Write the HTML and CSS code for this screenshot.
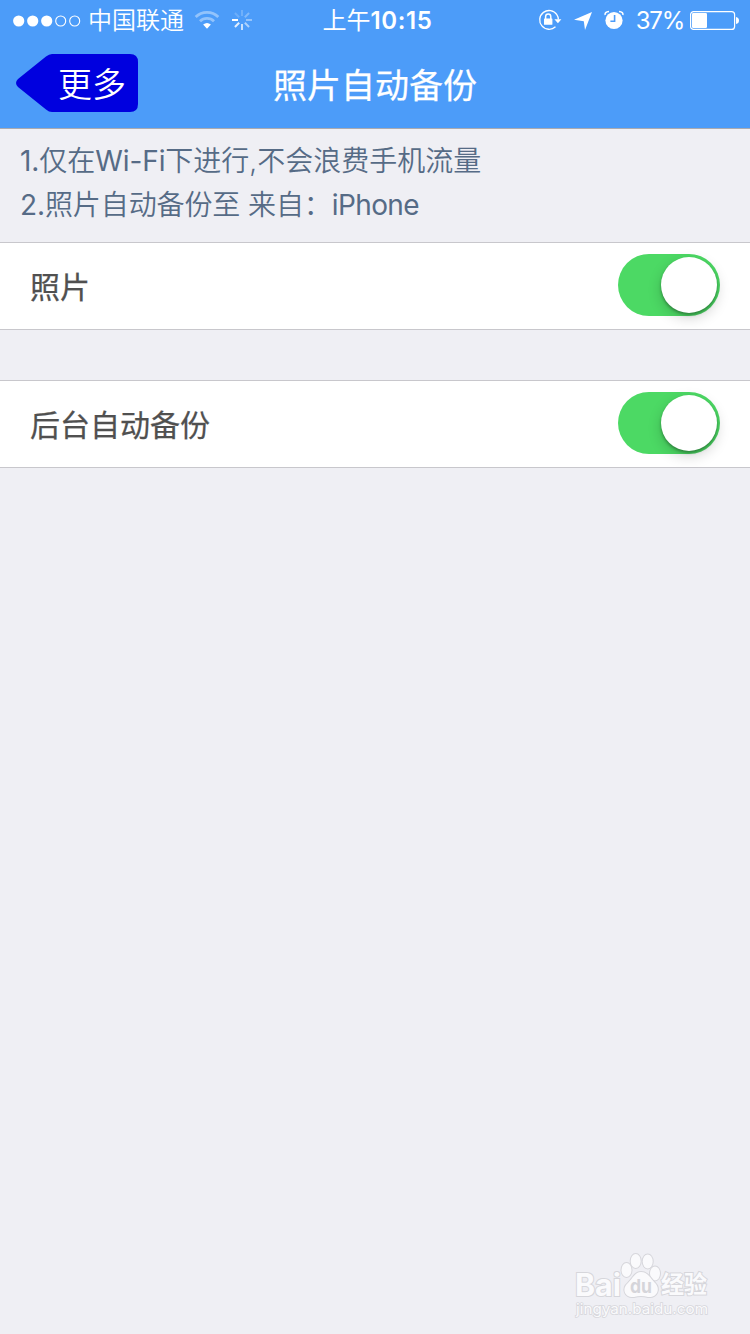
FILE: index.html
```html
<!DOCTYPE html>
<html lang="zh-CN">
<head>
<meta charset="utf-8">
<title>照片自动备份</title>
<link rel="stylesheet" href="styles.css">
</head>
<body>
<div class="screen">
  <header class="header">
    <div class="status">
      <div class="status-left">
        <svg class="signal" width="68" height="12" viewBox="0 0 68 12"><g fill="#fff"><circle cx="5.7" cy="6" r="5.6"/><circle cx="19.7" cy="6" r="5.6"/><circle cx="33.7" cy="6" r="5.6"/></g><g fill="none" stroke="#fff" stroke-width="1.1"><circle cx="47.7" cy="6" r="5"/><circle cx="61.7" cy="6" r="5"/></g></svg>
        <span class="carrier">中国联通</span>
        <svg class="wifi" width="26" height="20" viewBox="0 0 26 20"><g fill="none" stroke="#fff" stroke-opacity=".4" stroke-width="2.8"><path d="M1.7 7.1A16.1 16.1 0 0 1 24.3 7.1"/><path d="M6 11.3A10 10 0 0 1 20 11.3"/></g><path d="M13 18.8 9.1 14.6Q13 11.2 16.9 14.6Z" fill="#fff"/></svg>
        <svg class="spinner" width="20" height="20" viewBox="-10 -10 20 20"><g stroke="#fff" stroke-width="2"><path d="M0-4V-10" opacity=".2"/><path d="M0-4V-10" opacity=".3" transform="rotate(45)"/><path d="M0-4V-10" opacity=".4" transform="rotate(90)"/><path d="M0-4V-10" opacity=".55" transform="rotate(135)"/><path d="M0-4V-10" opacity=".7" transform="rotate(180)"/><path d="M0-4V-10" opacity=".85" transform="rotate(225)"/><path d="M0-4V-10" transform="rotate(270)"/><path d="M0-4V-10" opacity=".18" transform="rotate(315)"/></g></svg>
      </div>
      <div class="clock">上午<b>10:15</b></div>
      <div class="status-right">
        <svg class="lock" width="24" height="22" viewBox="0 0 24 22"><path d="M18.9 5.6A9.4 9.4 0 1 0 17.5 17.8M18.8 5.6Q20.3 7.7 20.4 10.5" fill="none" stroke="#fff" stroke-width="1.3"/><path d="M16.4 10.2h7l-3.5 4z" fill="#fff"/><rect x="6" y="9.4" width="8.4" height="6.4" rx=".6" fill="#fff"/><path d="M7.6 10V7.7a2.6 2.6 0 0 1 5.2 0V10" fill="none" stroke="#fff" stroke-width="1.5"/></svg>
        <svg class="arrow" width="18" height="18" viewBox="0 0 18 18"><path d="M18 0 11 18 9.8 9.3 0 7.8Z" fill="#fff"/></svg>
        <svg class="alarm" width="20" height="20" viewBox="0 0 20 20"><circle cx="10" cy="10.5" r="8.6" fill="#fff"/><path d="M1.2 5Q.4 1.9 5 1.6M18.8 5Q19.6 1.9 15 1.6" fill="none" stroke="#fff" stroke-width="1.5"/><path d="M10.6 5V11.2H6.4" fill="none" stroke="#4c9cf9" stroke-width="1.6"/></svg>
        <span class="percent">37%</span>
        <svg class="battery" width="49" height="19" viewBox="0 0 49 19"><rect x=".6" y=".6" width="44" height="17.8" rx="3" fill="none" stroke="#fff" stroke-width="1.2"/><rect x="2" y="2" width="15" height="15" rx="1.2" fill="#fff"/><path d="M46 6q3 .5 3 3.5t-3 3.5z" fill="#fff"/></svg>
      </div>
    </div>
    <nav class="nav">
      <a class="back">
        <svg class="back-shape" width="123" height="58" viewBox="0 0 123 58"><path d="M37 0H115Q123 0 123 8V50Q123 58 115 58H37Q34 58 31 55.5L3 33Q-1 29 3 25L31 2.5Q34 0 37 0Z" fill="#0000df"/></svg>
        <span class="back-label">更多</span>
      </a>
      <h1 class="title">照片自动备份</h1>
    </nav>
  </header>
  <section class="info">
    <p class="line"><span class="latin">1.</span>仅在<span class="latin">Wi-Fi</span>下进行,不会浪费手机流量</p>
    <p class="line second"><span class="latin">2.</span>照片自动备份至 来自：<span class="device">iPhone</span></p>
  </section>
  <div class="row"><span class="label">照片</span><span class="switch"><i class="knob"></i></span></div>
  <div class="row spaced"><span class="label">后台自动备份</span><span class="switch"><i class="knob"></i></span></div>
  <footer class="brand">
    <svg class="brand-mark" width="150" height="74" viewBox="0 0 150 74">
      <g class="brand-ink">
        <text x="4" y="43.5" font-size="31" font-weight="700" textLength="46" lengthAdjust="spacingAndGlyphs">Bai</text>
        <ellipse cx="55.5" cy="18" rx="5" ry="7"/><ellipse cx="64.7" cy="9" rx="5" ry="7"/><ellipse cx="76.7" cy="9.5" rx="5" ry="7"/><ellipse cx="84" cy="21.5" rx="5" ry="7"/>
        <path d="M70 20C77 20 79 26 84 31C90 37 86 46 77 45Q70 43 63 45C54 46 50 37 57 31C62 26 64 20 70 20Z"/>
        <text x="90" y="41" font-size="24" font-weight="700" textLength="46" lengthAdjust="spacingAndGlyphs">经验</text>
        <text class="brand-url" x="5" y="61.5" font-size="14.5" textLength="132" lengthAdjust="spacingAndGlyphs">jingyan.baidu.com</text>
      </g>
      <text class="brand-du" x="59" y="41" font-size="19" textLength="22" lengthAdjust="spacingAndGlyphs">du</text>
    </svg>
  </footer>
</div>
</body>
</html>
```
FILE: styles.css
```css
* { box-sizing: border-box; }
body { margin: 0; background: #efeff4; font-family: Inter, "Noto Sans CJK SC", sans-serif; }
svg { display: block; flex: none; }
.screen { width: 750px; height: 1334px; display: flex; flex-direction: column; overflow: hidden; background: #efeff4; }
.header { height: 129px; flex: none; background: #4c9cf9; border-bottom: 1px solid #aaaab0; color: #fff; }
.status { height: 40px; display: grid; grid-template-columns: 1fr auto 1fr; align-items: center; font-size: 24px; line-height: 38px; white-space: nowrap; }
.status-left { display: flex; align-items: center; height: 40px; padding-left: 13px; }
.signal { margin-top: 1px; }
.carrier { margin-left: 7px; padding-top: 2px; font-weight: 350; }
.wifi { margin-left: 10px; }
.spinner { margin-left: 12px; }
.clock { height: 40px; padding: 2px 0 0 5px; }
.clock b { font-weight: 600; font-size: 24px; letter-spacing: .6px; }
.status-right { display: flex; align-items: center; justify-content: flex-end; height: 40px; padding-right: 11px; }
.arrow { margin: 2px 0 0 12px; }
.alarm { margin-left: 12px; }
.percent { margin-left: 12px; padding-top: 2px; font-size: 24px; letter-spacing: -1.2px; }
.battery { margin-left: 6px; }
.nav { height: 88px; display: grid; grid-template-columns: 1fr auto 1fr; align-items: center; }
.back { display: grid; width: 123px; height: 58px; margin: -2px 0 0 15px; }
.back-shape, .back-label { grid-area: 1 / 1; }
.back-label { padding: 2px 0 0 43px; font-size: 34px; line-height: 58px; height: 58px; font-weight: 350; }
.title { margin: 0; padding-top: 4px; font-size: 34px; line-height: 84px; font-weight: 400; -webkit-text-stroke: .25px currentColor; }
.info { height: 113px; flex: none; padding: 10px 20px 0; color: #566b86; font-size: 28px; line-height: 44px; font-weight: 350; white-space: nowrap; }
.line { margin: 0; }
.second { letter-spacing: -.1px; }
.latin { font-weight: 400; letter-spacing: -.1px; }
.device { font-weight: 400; letter-spacing: -.6px; }
.row { height: 88px; flex: none; display: flex; align-items: center; justify-content: space-between; padding: 0 30px; background: #fff; border: solid #c8c7cc; border-width: 1px 0; }
.spaced { margin-top: 50px; }
.label { padding-top: 1px; font-size: 30px; line-height: 44px; font-weight: 400; -webkit-text-stroke: .25px currentColor; color: #505050; }
.switch { width: 102px; height: 62px; border-radius: 31px; background: #4cd964; display: flex; justify-content: flex-end; padding: 3px; margin-top: -2px; }
.knob { width: 56px; height: 56px; border-radius: 50%; background: #fff; box-shadow: 0 5px 14px rgba(0,0,0,.18), 0 2px 3px rgba(0,0,0,.3); }
.brand { margin-top: auto; display: flex; justify-content: flex-end; padding: 0 29px 8px 0; }
.brand-ink { fill: #fafafc; stroke: #d6d6db; stroke-width: 2px; paint-order: stroke; }
.brand-url { stroke-width: 1.5px; }
.brand-du { fill: #d5d5da; font-weight: 700; }
```
